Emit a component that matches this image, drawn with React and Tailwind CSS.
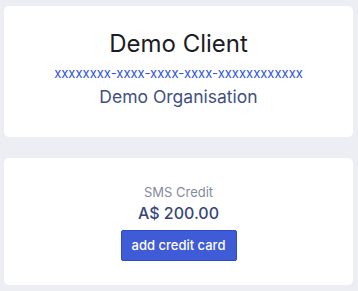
export default function App() {
  return (
    <div
      className="min-h-[291px] bg-[#eceef3] pt-[6px] pl-[4px] pr-[5px] pb-[6px] flex flex-col gap-[21px]"
      style={{ fontFamily: "Inter, 'Noto Sans', sans-serif" }}
    >
      <div className="h-[131px] rounded-[5px] bg-white flex flex-col items-center pt-[24px]">
        <h1 className="text-[24px] leading-[28px] text-[#1b1d24]">Demo Client</h1>
        <p className="mt-[7px] text-[13px] leading-[16px] text-[#2f55e0]">
          xxxxxxxx-xxxx-xxxx-xxxx-xxxxxxxxxxxx
        </p>
        <p className="mt-[5px] text-[17.5px] leading-[22px] text-[#41507f]">Demo Organisation</p>
      </div>

      <div className="h-[127px] rounded-[5px] bg-white flex flex-col items-center pt-[25px]">
        <p className="text-[13px] leading-[18px] text-[#858a9c]">SMS Credit</p>
        <p className="mt-[1px] text-[16px] leading-[22px] font-medium text-[#37467a]">A$ 200.00</p>
        <button className="mt-[6px] h-[31px] w-[116px] rounded-[2px] border border-[#2d4ac8] bg-[#3f5bd5] text-[13px] font-medium text-white">
          add credit card
        </button>
      </div>
    </div>
  );
}
